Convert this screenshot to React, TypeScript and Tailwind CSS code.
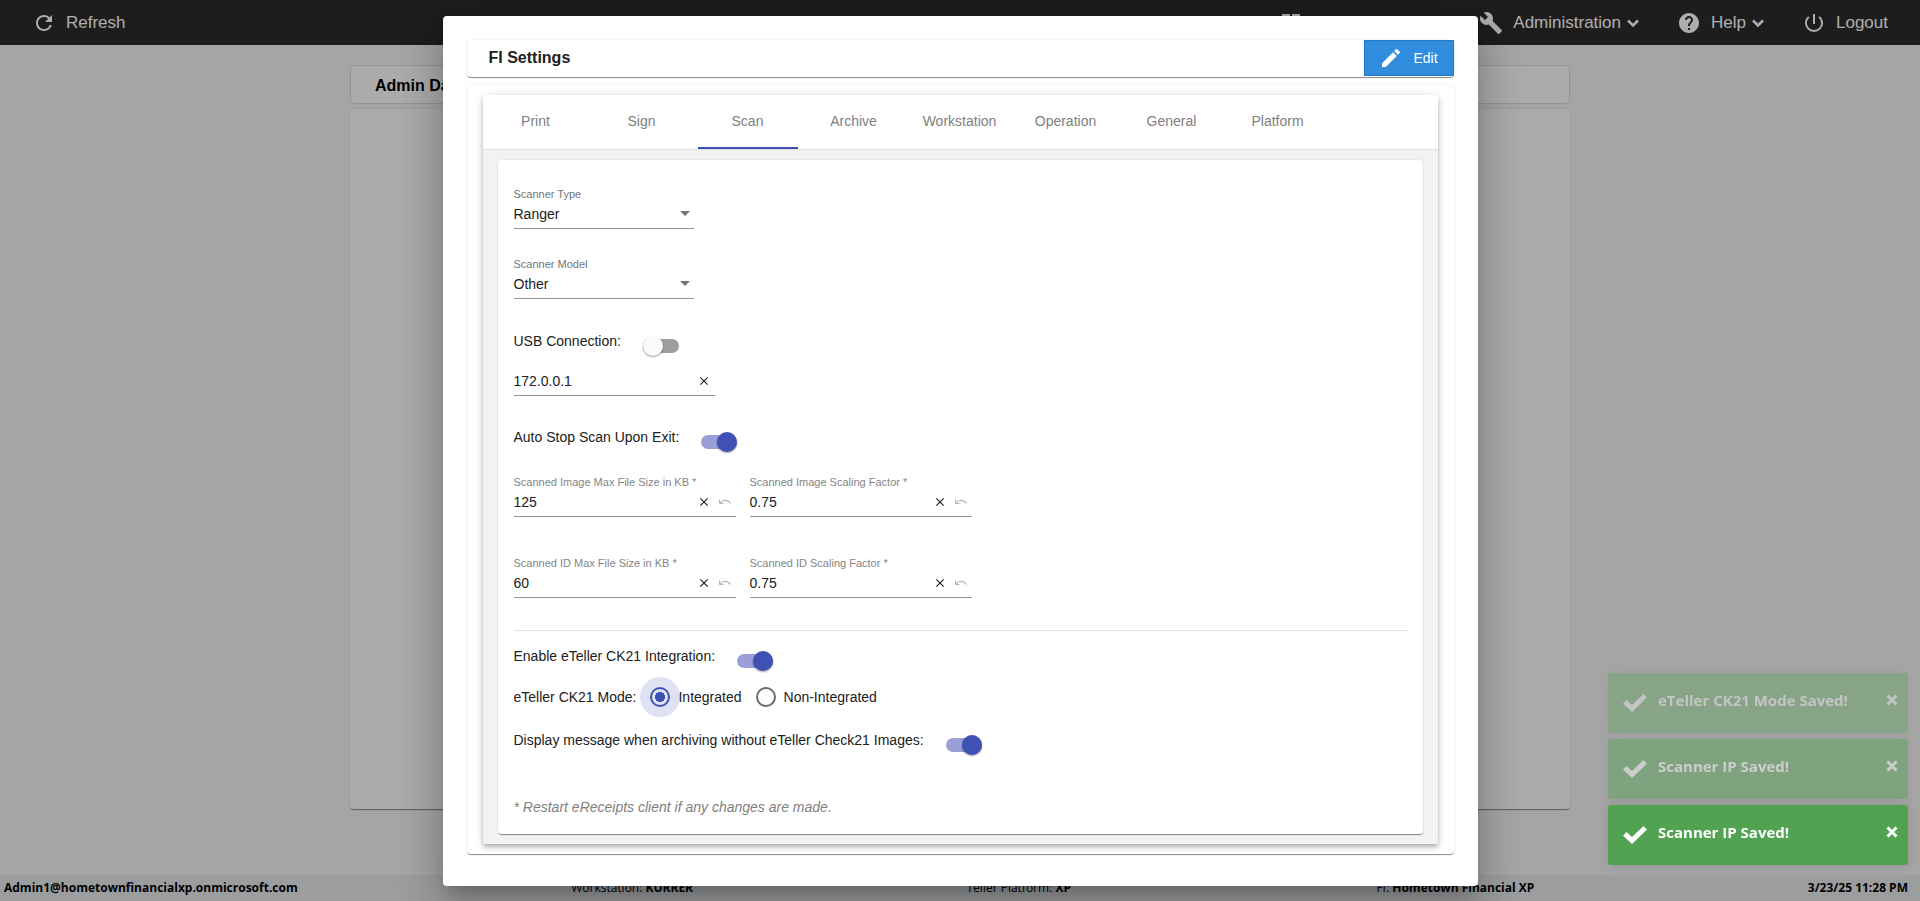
import React, { useState } from 'react';
import {
  MdBuild,
  MdClose,
  MdDashboard,
  MdEdit,
  MdHelp,
  MdPowerSettingsNew,
  MdRefresh,
} from 'react-icons/md';

const CARD = 'rounded shadow-[0_2px_1px_-1px_rgba(0,0,0,0.3),0_1px_1px_rgba(0,0,0,0.2),0_0_2px_rgba(0,0,0,0.12)]';

const TABS = ['Print', 'Sign', 'Scan', 'Archive', 'Workstation', 'Operation', 'General', 'Platform'];

const ChevronIcon = () => (
  <svg width="24" height="24" viewBox="0 0 24 24" fill="none" stroke="currentColor" strokeWidth="2.6" aria-hidden="true">
    <path d="M7 9.5L12 14.5L17 9.5" />
  </svg>
);

const UndoIcon = () => (
  <svg width="12" height="6" viewBox="0 0 12 6" fill="none" stroke="currentColor" aria-hidden="true">
    <path d="M0.5 0.5V4.5H4.5" />
    <path d="M1 4C4 0.5 9 0.5 11.5 4.5" strokeWidth="1.2" />
  </svg>
);

interface SelectFieldProps {
  id: string;
  label: string;
  options: string[];
}

const SelectField: React.FC<SelectFieldProps> = ({ id, label, options }) => (
  <div className="w-[180px] border-b border-[#949494]">
    <label htmlFor={id} className="block text-[11px] leading-3 text-[#757575]">
      {label}
    </label>
    <div className="relative mt-0.5 flex items-center pb-0.5">
      <select id={id} className="block h-6 w-full appearance-none bg-transparent text-sm text-[#212121] outline-none">
        {options.map((option) => (
          <option key={option}>{option}</option>
        ))}
      </select>
      <svg
        width="10"
        height="5"
        viewBox="0 0 10 5"
        className="pointer-events-none absolute right-1 fill-[#757575]"
        aria-hidden="true"
      >
        <path d="M0 0H10L5 5Z" />
      </svg>
    </div>
  </div>
);

interface NumberFieldProps {
  id: string;
  label: string;
  initial: string;
}

const NumberField: React.FC<NumberFieldProps> = ({ id, label, initial }) => {
  const [value, setValue] = useState(initial);

  return (
    <div className="w-[222px] border-b border-[#949494]">
      <label htmlFor={id} className="block text-[11px] leading-3 text-[#858585]">
        {label} *
      </label>
      <div className="flex items-center pb-0.5 pt-0.5">
        <input
          id={id}
          className="h-6 w-0 flex-1 bg-transparent text-sm text-[#212121] outline-none"
          value={value}
          onChange={(e) => setValue(e.target.value)}
        />
        <button type="button" aria-label="Clear" className="mr-2 text-[#212121]" onClick={() => setValue('')}>
          <MdClose className="size-3.5" />
        </button>
        <button type="button" aria-label="Undo" className="mr-[5px] text-[#b5b5b5]" onClick={() => setValue(initial)}>
          <UndoIcon />
        </button>
      </div>
    </div>
  );
};

interface ToggleProps {
  label: string;
  initial?: boolean;
}

const Toggle: React.FC<ToggleProps> = ({ label, initial = false }) => (
  <label className="flex h-6 items-start gap-[22px] text-sm leading-5 text-[#212121]">
    {label}
    <span className="relative mt-[5px] flex h-5 w-9 items-center">
      <input
        type="checkbox"
        defaultChecked={initial}
        className="peer h-3.5 w-9 appearance-none rounded-full bg-[#9e9e9e] checked:bg-[#9a9fd8]"
      />
      <span className="pointer-events-none absolute left-0 size-5 rounded-full bg-[#fafafa] shadow-[0_1px_2px_rgba(0,0,0,0.4)] peer-checked:left-4 peer-checked:bg-[#3f51b5]" />
    </span>
  </label>
);

interface ToastProps {
  message: string;
  className: string;
}

const Toast: React.FC<ToastProps> = ({ message, className }) => (
  <div className={`flex h-[60px] w-[300px] items-center rounded-[3px] bg-[#51a351] pl-[15px] pr-2.5 text-white shadow-[0_0_12px_rgba(0,0,0,0.12)] ${className}`}>
    <svg width="24" height="18" viewBox="0 0 24 18" fill="currentColor" aria-hidden="true">
      <path d="M0 9.5L3.5 6L9 11L20.5 0L24 3.5L9 18Z" />
    </svg>
    <span className="ml-[11px] flex-1 pb-1.5 font-['Open_Sans',sans-serif] text-[15px] font-bold">{message}</span>
    <button type="button" aria-label="Dismiss" className="pb-1.5">
      <svg width="12" height="12" viewBox="0 0 12 12" stroke="currentColor" strokeWidth="3" aria-hidden="true">
        <path d="M1.5 1.5L10.5 10.5M10.5 1.5L1.5 10.5" />
      </svg>
    </button>
  </div>
);

const PageHeader: React.FC = () => (
  <header className="flex h-[45px] items-center justify-between bg-[#2c2c2c] px-8 text-[17px] text-white">
    <button type="button" className="flex items-center gap-2.5">
      <MdRefresh className="size-6" />
      Refresh
    </button>
    <nav className="flex items-center">
      <button type="button" className="mr-44 flex items-center" aria-label="Dashboard">
        <MdDashboard className="size-6" />
      </button>
      <button type="button" className="mr-8 flex items-center">
        <MdBuild className="mr-2.5 size-6" />
        Administration
        <ChevronIcon />
      </button>
      <button type="button" className="mr-8 flex items-center">
        <MdHelp className="mr-2.5 size-6" />
        Help
        <ChevronIcon />
      </button>
      <button type="button" className="flex items-center gap-2.5">
        <MdPowerSettingsNew className="size-6" />
        Logout
      </button>
    </nav>
  </header>
);

const StatusBar: React.FC = () => (
  <footer className="flex h-[26px] items-center justify-between bg-[#e5e8eb] pl-1 pr-3 font-['Open_Sans',sans-serif] text-xs text-black">
    <b>Admin1@hometownfinancialxp.onmicrosoft.com</b>
    <span>Workstation: <b>KURRER</b></span>
    <span className="pr-8">Teller Platform: <b>XP</b></span>
    <span>FI: <b>Hometown Financial XP</b></span>
    <b>3/23/25 11:28 PM</b>
  </footer>
);

const ScanSettings: React.FC = () => {
  const [ip, setIp] = useState('172.0.0.1');

  return (
    <div className={`${CARD} bg-white px-4 pb-[17px] pt-7`}>
      <SelectField id="scanner-type" label="Scanner Type" options={['Ranger']} />
      <div className="mt-[29px]">
        <SelectField id="scanner-model" label="Scanner Model" options={['Other']} />
      </div>

      <div className="mt-8">
        <Toggle label="USB Connection:" />
      </div>
      <div className="mt-3.5 flex w-[201px] items-center border-b border-[#949494] pb-0.5">
        <input
          aria-label="Scanner IP"
          className="h-6 w-0 flex-1 bg-transparent text-sm text-[#212121] outline-none"
          value={ip}
          onChange={(e) => setIp(e.target.value)}
        />
        <button type="button" aria-label="Clear" className="mr-1 text-[#212121]" onClick={() => setIp('')}>
          <MdClose className="size-3.5" />
        </button>
      </div>

      <div className="mt-[31px]">
        <Toggle label="Auto Stop Scan Upon Exit:" initial />
      </div>

      <div className="mt-[25px] grid grid-cols-[222px_222px] gap-x-3.5 gap-y-10">
        <NumberField id="image-size" label="Scanned Image Max File Size in KB" initial="125" />
        <NumberField id="image-scale" label="Scanned Image Scaling Factor" initial="0.75" />
        <NumberField id="id-size" label="Scanned ID Max File Size in KB" initial="60" />
        <NumberField id="id-scale" label="Scanned ID Scaling Factor" initial="0.75" />
      </div>

      <hr className="mt-8 border-[#e0e0e0]" />

      <div className="mt-[15px]">
        <Toggle label="Enable eTeller CK21 Integration:" initial />
      </div>
      <fieldset className="mt-[11px] flex h-8 items-center text-sm text-[#212121]">
        <legend className="float-left mr-3.5">eTeller CK21 Mode:</legend>
        <label className="mr-3.5 flex items-center gap-2">
          <input
            type="radio"
            name="mode"
            defaultChecked
            className="size-5 appearance-none rounded-full border-2 border-[#3f51b5] bg-[radial-gradient(circle,#3f51b5_5px,#dfe2f3_5px)] shadow-[0_0_0_10px_#dfe2f3]"
          />
          Integrated
        </label>
        <label className="flex items-center gap-2">
          <input type="radio" name="mode" className="size-5 appearance-none rounded-full border-2 border-[#6b6b78]" />
          Non-Integrated
        </label>
      </fieldset>
      <div className="mt-[17px]">
        <Toggle label="Display message when archiving without eTeller Check21 Images:" initial />
      </div>

      <p className="mt-[43px] text-sm italic text-[#808080]">* Restart eReceipts client if any changes are made.</p>
    </div>
  );
};

const SettingsDialog: React.FC = () => (
  <div
    role="dialog"
    aria-label="FI Settings"
    className="w-full max-w-[1035px] rounded bg-white p-6 pb-8 shadow-[0_11px_15px_-7px_rgba(0,0,0,0.2),0_24px_38px_3px_rgba(0,0,0,0.14),0_9px_46px_8px_rgba(0,0,0,0.12)]"
  >
    <div className={`${CARD} flex h-[37px] items-center justify-between pl-[22px]`}>
      <h1 className="text-base font-bold text-[#212121]">FI Settings</h1>
      <button type="button" className="mb-px flex h-9 w-[90px] items-center justify-center gap-2.5 border border-[#2779c4] bg-[#308ddd] text-sm text-white">
        <MdEdit className="size-6" />
        Edit
      </button>
    </div>

    <div className={`${CARD} mt-2 px-4 py-2.5`}>
      <div className="bg-[#f2f2f2] shadow-[0_2px_4px_-1px_rgba(0,0,0,0.2),0_4px_5px_rgba(0,0,0,0.14),0_1px_10px_rgba(0,0,0,0.12)]">
        <div role="tablist" className="flex border-b border-[#e0e0e0] bg-white pl-[3px]">
          {TABS.map((tab) => (
            <button
              key={tab}
              type="button"
              role="tab"
              aria-selected={tab === 'Scan'}
              className="mr-1.5 h-[54px] w-[100px] border-b-2 border-transparent text-sm text-[#808080] aria-selected:border-[#3f51b5]"
            >
              {tab}
            </button>
          ))}
        </div>
        <div className="px-[15px] py-2.5">
          <ScanSettings />
        </div>
      </div>
    </div>
  </div>
);

const App: React.FC = () => (
  <div className="relative flex min-h-screen flex-col bg-[#f3f3f3] font-['Liberation_Sans',Arial,sans-serif]">
    <PageHeader />
    <main className="mx-auto flex w-full max-w-[1220px] flex-1 flex-col pb-[66px] pt-5">
      <h2 className="h-[39px] rounded border border-[#dadada] bg-[#fdfdfd] pl-6 text-base font-bold leading-10 text-black">
        Admin Dashboard
      </h2>
      <div className={`${CARD} mt-[5px] flex-1 bg-[#fdfdfd]`} />
    </main>
    <StatusBar />

    <div className="absolute inset-0 flex items-center justify-center bg-black/32">
      <SettingsDialog />
    </div>

    <div className="fixed bottom-9 right-3 flex flex-col gap-1.5">
      <Toast message="eTeller CK21 Mode Saved!" className="opacity-35" />
      <Toast message="Scanner IP Saved!" className="opacity-45" />
      <Toast message="Scanner IP Saved!" className="opacity-100" />
    </div>
  </div>
);

export default App;
